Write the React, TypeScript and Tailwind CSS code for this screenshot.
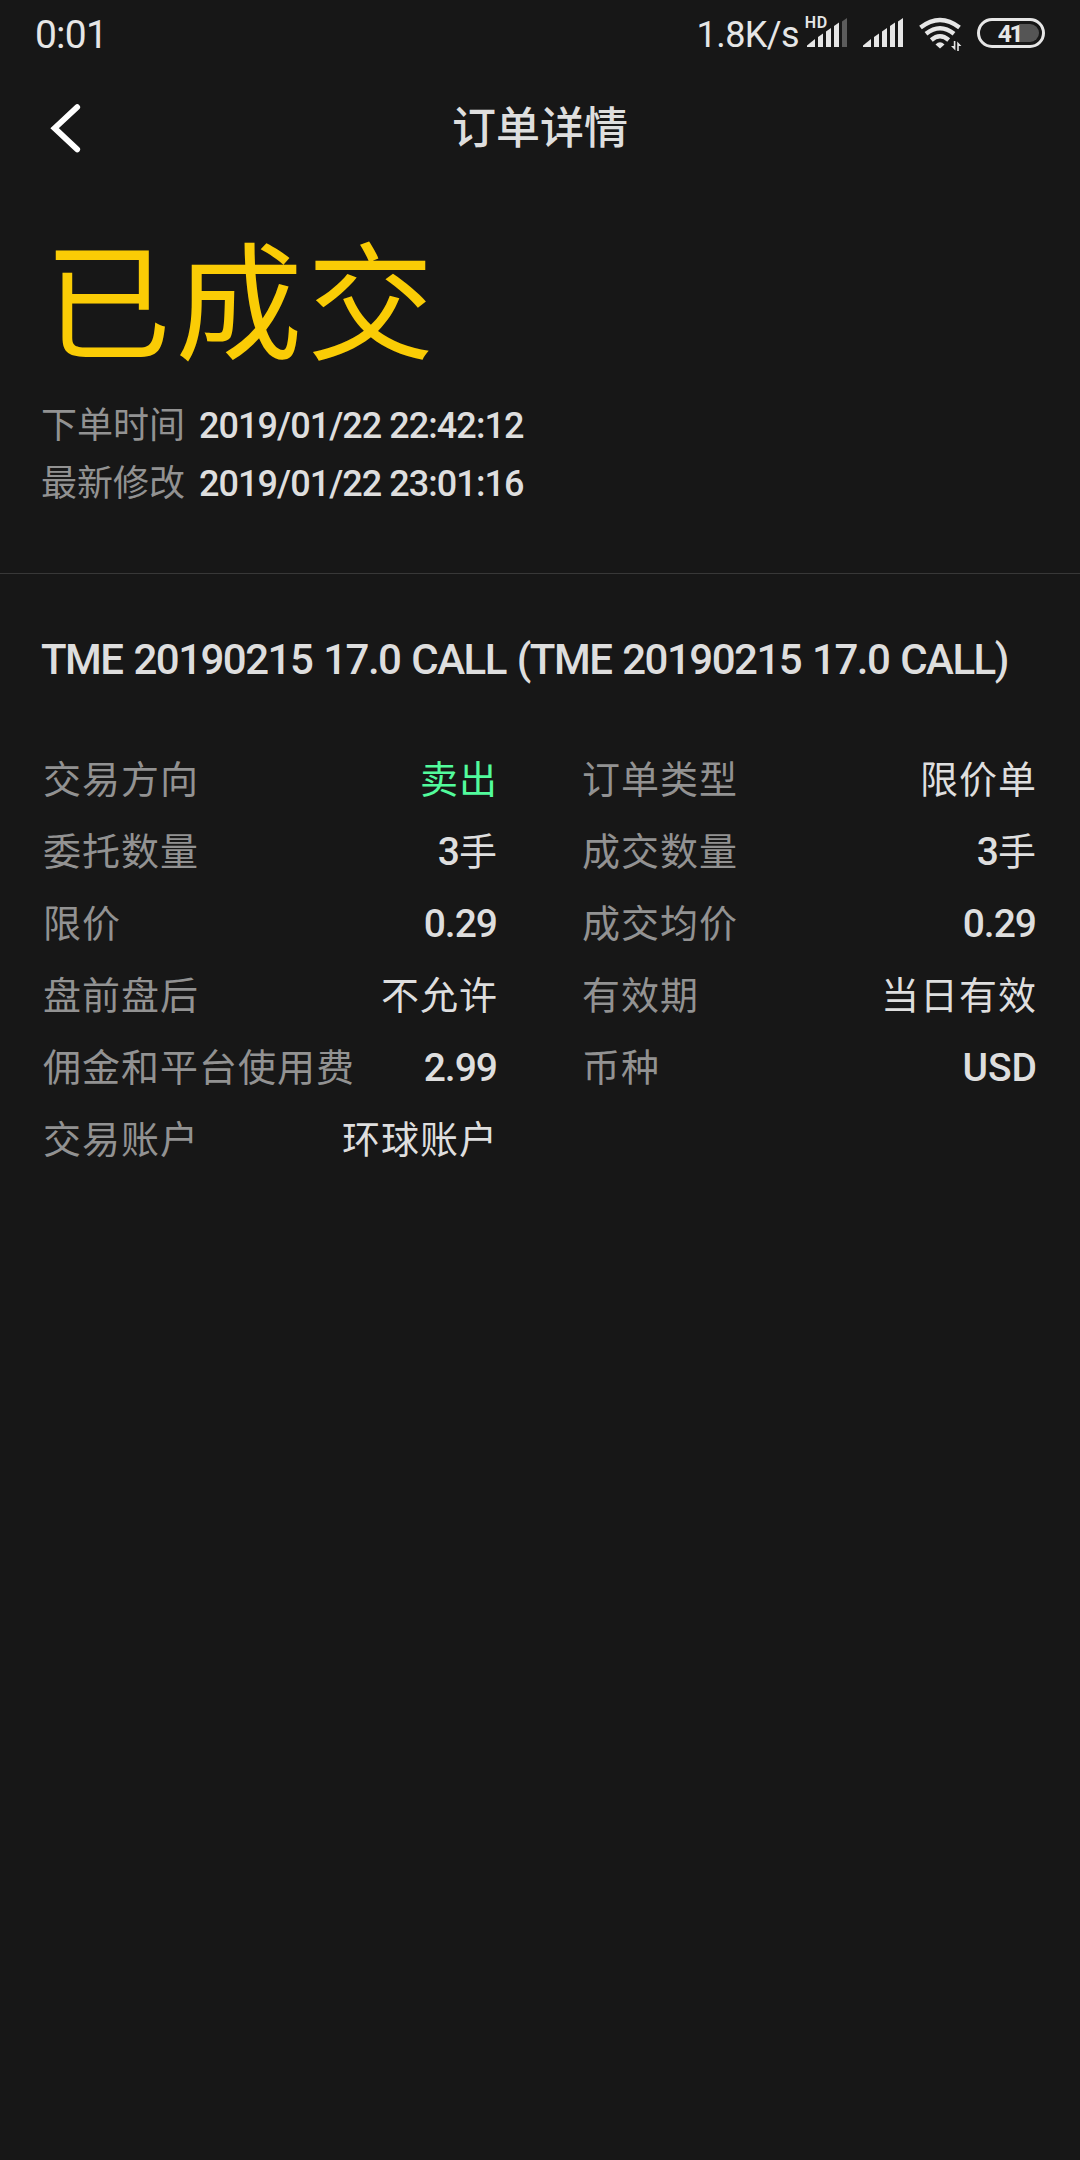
import clsx from "clsx";

type Field = {
  label: string;
  value?: string;
  unit?: string;
  text?: string;
  tone?: "sell";
};

const leftFields: Field[] = [
  { label: "交易方向", text: "卖出", tone: "sell" },
  { label: "委托数量", value: "3", unit: "手" },
  { label: "限价", value: "0.29" },
  { label: "盘前盘后", text: "不允许" },
  { label: "佣金和平台使用费", value: "2.99" },
  { label: "交易账户", text: "环球账户" },
];

const rightFields: Field[] = [
  { label: "订单类型", text: "限价单" },
  { label: "成交数量", value: "3", unit: "手" },
  { label: "成交均价", value: "0.29" },
  { label: "有效期", text: "当日有效" },
  { label: "币种", value: "USD" },
];

const timestamps = [
  { label: "下单时间", value: "2019/01/22 22:42:12" },
  { label: "最新修改", value: "2019/01/22 23:01:16" },
];

function SignalBars({ weak = false }: { weak?: boolean }) {
  return (
    <>
      <path d="M0 31 V29.5 L8 23 V31 Z" />
      <path d="M11 21 L16 17.5 V31 H11 Z" />
      <path d="M19 15.5 L24 12 V31 H19 Z" />
      <path d="M27 10 L32 6.5 V31 H27 Z" />
      <path d="M35 5.5 L40 2 V31 H35 Z" fill={weak ? "#5c5c5c" : undefined} />
    </>
  );
}

function StatusBar() {
  return (
    <div className="flex h-[68px] items-center justify-between px-[35px] text-[#e6e6e6]">
      <span className="pt-0.5 text-[39px] leading-[68px] tracking-[-0.8px]">0:01</span>
      <div className="flex h-full items-center">
        <span className="mr-2 pt-0.5 text-[36px] leading-[68px] tracking-[-0.6px]">1.8K/s</span>
        <svg width="45" height="52" viewBox="-4 -8 45 52" fill="#e6e6e6" className="mr-[15px] -ml-1">
          <text x="-2.2" y="12" fontSize="16" fontWeight="600" letterSpacing="0.6">
            HD
          </text>
          <SignalBars weak />
        </svg>
        <svg width="41" height="36" viewBox="0 0 41 36" fill="#e6e6e6" className="mr-[14px]">
          <SignalBars />
        </svg>
        {/* wifi with traffic arrows */}
        <svg width="44" height="36" viewBox="0 0 44 36" fill="none" className="mr-[15px]">
          <g stroke="#e6e6e6" strokeWidth="4.4">
            <path d="M2.5 11.5 Q22 -3.5 41.5 11.5" />
            <path d="M8 17.8 Q22 6.5 36 17.8" />
            <path d="M13.3 24 Q22 16.5 30.7 24" />
          </g>
          <path d="M17.5 28.5 Q22 24 26.5 28.5 L22 32.5 Z" fill="#e6e6e6" />
          <path d="M37.4 25 V34.5 L33 30 H35.8 V25 Z" fill="#e6e6e6" />
          <path d="M39.2 35 V25.5 L43.4 30 H40.8 V35 Z" fill="#e6e6e6" />
        </svg>
        <svg width="68" height="36" viewBox="0 0 68 36">
          <path d="M42 8 H53 A9 9 0 0 1 53 26 H42 Z" fill="#555555" />
          <rect x="1.5" y="3.5" width="65" height="27" rx="13.5" fill="none" stroke="#e6e6e6" strokeWidth="3" />
          <text x="32.5" y="25.7" textAnchor="middle" fontSize="24.5" fontWeight="700" letterSpacing="-2.4" fill="#e6e6e6">
            41
          </text>
        </svg>
      </div>
    </div>
  );
}

function Header() {
  return (
    <header className="relative flex h-[118px] items-center justify-center">
      <button aria-label="返回" className="absolute top-[35px] left-[45px]">
        <svg width="38" height="50" viewBox="0 0 38 50" fill="none">
          <path d="M32.2 4.2 L9.6 25.2 L32.2 46.4" stroke="#ffffff" strokeWidth="5.8" strokeLinecap="round" />
        </svg>
      </button>
      <h1 className="pt-[3px] text-[44px] leading-none font-medium">订单详情</h1>
    </header>
  );
}

function FieldRow({ label, value, unit, text, tone }: Field) {
  return (
    <div className="flex h-[72px] items-center justify-between text-[38px] leading-[72px] tracking-[1px]">
      <span className="text-[#929292]">{label}</span>
      <span className={clsx("flex", tone === "sell" && "text-[#52fb9c]")}>
        {value && (
          <span
            className={clsx(
              "text-[39px] font-medium",
              value === "USD" ? "tracking-normal" : "tracking-[-1px]",
              !unit && value !== "USD" && "pr-px",
            )}
          >
            {value}
          </span>
        )}
        {unit}
        {text}
      </span>
    </div>
  );
}

export default function App() {
  return (
    <div className="min-h-[2160px] w-[1080px] bg-[#171717] font-['Roboto','Noto_Sans_CJK_SC',sans-serif] text-[#dedede]">
      <StatusBar />
      <Header />

      <section className="h-[388px] border-b border-[#383838] px-[41px] pt-[55px]">
        <p className="pl-[3px] text-[127px] leading-[132px] tracking-[4.5px] text-[#facc05]">已成交</p>
        <div className="mt-6">
          {timestamps.map((item) => (
            <div key={item.label} className="flex h-[58px] items-center text-[36px] leading-[58px]">
              <span className="mr-[14px] text-[#929292]">{item.label}</span>
              <span className="font-medium tracking-[-0.95px]">{item.value}</span>
            </div>
          ))}
        </div>
      </section>

      <section className="px-[43px] pt-14">
        <h2 className="-mx-0.5 text-[42px] leading-[60px] font-medium tracking-[-1.5px] [word-spacing:1.9px] whitespace-nowrap">
          TME 20190215 17.0 CALL (TME 20190215 17.0 CALL)
        </h2>
        <div className="mt-[54px] grid grid-cols-2 gap-x-[84px]">
          <div>
            {leftFields.map((field) => (
              <FieldRow key={field.label} {...field} />
            ))}
          </div>
          <div>
            {rightFields.map((field) => (
              <FieldRow key={field.label} {...field} />
            ))}
          </div>
        </div>
      </section>
    </div>
  );
}
